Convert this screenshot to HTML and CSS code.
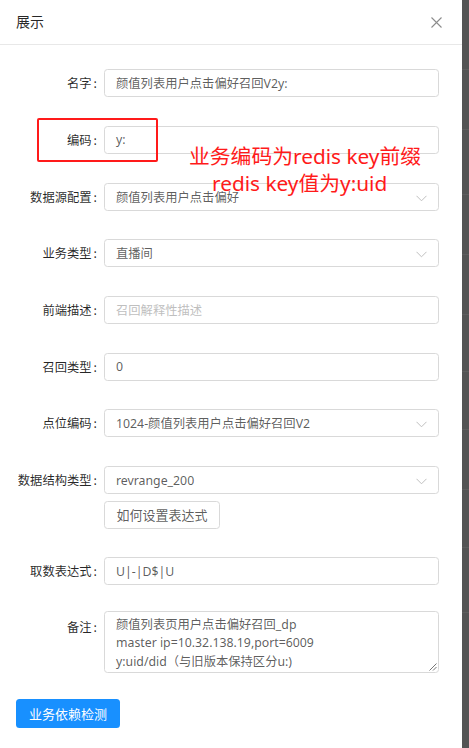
FILE: index.html
```html
<!DOCTYPE html>
<html lang="zh">
<head>
<meta charset="utf-8">
<title>展示</title>
<link rel="stylesheet" href="styles.css">
</head>
<body>
<div class="page">
  <div class="modal">
    <div class="header">
      <div class="title">展示</div>
      <svg class="close" width="11" height="11" viewBox="0 0 11 11"><path d="M0.5 0.5L10.5 10.5M10.5 0.5L0.5 10.5" stroke="#8c8c8c" stroke-width="1.1" fill="none"/></svg>
    </div>
    <div class="body">
      <div class="row">
        <div class="label">名字</div>
        <div class="input">颜值列表用户点击偏好召回V2y:</div>
      </div>
      <div class="row">
        <div class="label">编码</div>
        <div class="input">y:</div>
      </div>
      <div class="row">
        <div class="label">数据源配置</div>
        <div class="input select">颜值列表用户点击偏好<svg class="arrow" width="11" height="7" viewBox="0 0 11 7"><path d="M0.5 0.8L5.5 5.8L10.5 0.8" stroke="#bfbfbf" stroke-width="1" fill="none"/></svg></div>
      </div>
      <div class="row">
        <div class="label">业务类型</div>
        <div class="input select">直播间<svg class="arrow" width="11" height="7" viewBox="0 0 11 7"><path d="M0.5 0.8L5.5 5.8L10.5 0.8" stroke="#bfbfbf" stroke-width="1" fill="none"/></svg></div>
      </div>
      <div class="row">
        <div class="label">前端描述</div>
        <div class="input placeholder">召回解释性描述</div>
      </div>
      <div class="row">
        <div class="label">召回类型</div>
        <div class="input">0</div>
      </div>
      <div class="row">
        <div class="label">点位编码</div>
        <div class="input select">1024-颜值列表用户点击偏好召回V2<svg class="arrow" width="11" height="7" viewBox="0 0 11 7"><path d="M0.5 0.8L5.5 5.8L10.5 0.8" stroke="#bfbfbf" stroke-width="1" fill="none"/></svg></div>
      </div>
      <div class="row tight">
        <div class="label">数据结构类型</div>
        <div class="input select">revrange_200<svg class="arrow" width="11" height="7" viewBox="0 0 11 7"><path d="M0.5 0.8L5.5 5.8L10.5 0.8" stroke="#bfbfbf" stroke-width="1" fill="none"/></svg></div>
      </div>
      <div class="row help">
        <div></div>
        <div><span class="btn">如何设置表达式</span></div>
      </div>
      <div class="row short">
        <div class="label">取数表达式</div>
        <div class="input">U|-|D$|U</div>
      </div>
      <div class="row area-row">
        <div class="label top">备注</div>
        <div class="textarea">颜值列表页用户点击偏好召回_dp<br>master ip=10.32.138.19,port=6009<br>y:uid/did（与旧版本保持区分u:)<svg class="grip" width="9" height="9" viewBox="0 0 9 9"><path d="M8.5 1.5L1.5 8.5M8.5 5L5 8.5" stroke="#666" stroke-width="0.9" fill="none"/></svg></div>
      </div>
      <div class="footer">
        <span class="primary">业务依赖检测</span>
      </div>
      <div class="markbox"></div>
      <div class="note">业务编码为redis key前缀<br><span class="note2">redis key值为y:uid</span></div>
    </div>
  </div>
  <div class="mask">
    <div class="ml" style="height:70px"></div>
    <div class="ml" style="height:60px"></div>
    <div class="ml" style="height:65px"></div>
    <div class="ml" style="height:60px"></div>
    <div class="ml" style="height:60px"></div>
    <div class="ml" style="height:57px"></div>
    <div class="ml" style="height:58px"></div>
    <div class="ml" style="height:60px"></div>
    <div class="ml" style="height:58px"></div>
    <div class="ml" style="height:65px"></div>
  </div>
</div>
</body>
</html>
```
FILE: styles.css
```css
* { box-sizing: border-box; }
html, body { margin: 0; padding: 0; background: #fff; }
body {
  font-family: "Noto Sans", "Noto Sans CJK SC", sans-serif;
  font-size: 12.3px;
  color: rgba(0,0,0,0.65);
}
.page { display: flex; width: 469px; height: 748px; overflow: hidden; }
.modal { width: 462px; height: 748px; background: #fff; flex: none; }
.mask { width: 7px; height: 748px; background: #545454; flex: none; display: flex; flex-direction: column; }
.ml { border-bottom: 1px solid #5e5e5e; flex: none; }
.header {
  height: 45px;
  border-bottom: 1px solid #e8e8e8;
  display: flex;
  align-items: center;
  justify-content: space-between;
  padding: 0 20px 2px 16px;
}
.title { font-size: 14px; color: rgba(0,0,0,0.85); font-family: "Noto Sans CJK SC", sans-serif; }
.close { display: block; margin-top: 2px; }
.body { position: relative; padding: 24.3px 23px 0 16px; }
.row {
  display: grid;
  grid-template-columns: 88px 335px;
  align-items: center;
  margin-bottom: 28.7px;
}
.row.tight { margin-bottom: 0; }
.row.help { padding-top: 6.8px; margin-bottom: 28.3px; }
.row.short { margin-bottom: 26px; }
.row.area-row { align-items: start; margin-bottom: 25.7px; }
.label {
  text-align: right;
  padding-right: 7px;
  color: rgba(0,0,0,0.85);
  white-space: nowrap;
  font-family: "Noto Sans CJK SC", sans-serif;
}
.label::after { content: ":"; margin-left: 2px; }
.label.top { padding-top: 7px; }
.input {
  position: relative;
  height: 28px;
  border: 1px solid #d9d9d9;
  border-radius: 3.5px;
  padding: 0 10px 0 11px;
  display: flex;
  align-items: center;
  white-space: nowrap;
}
.placeholder { color: #bfbfbf; }
.arrow { position: absolute; right: 11px; top: 11px; }
.btn {
  display: inline-flex;
  align-items: center;
  justify-content: center;
  width: 116px;
  height: 28px;
  border: 1px solid #d9d9d9;
  border-radius: 3.5px;
  font-size: 13px;
  color: rgba(0,0,0,0.65);
  font-family: "Noto Sans CJK SC", sans-serif;
}
.textarea {
  position: relative;
  height: 62px;
  border: 1px solid #d9d9d9;
  border-radius: 3.5px;
  padding: 4px 10px 0 11px;
  line-height: 18.2px;
  white-space: nowrap;
}
.grip { position: absolute; right: 1px; bottom: 1px; }
.footer { display: flex; }
.primary {
  display: inline-flex;
  align-items: center;
  justify-content: center;
  width: 104px;
  height: 29px;
  background: #1890ff;
  border-radius: 3.5px;
  color: #fff;
  font-size: 13px;
  font-family: "Noto Sans CJK SC", sans-serif;
}
.markbox {
  position: absolute;
  left: 37.3px;
  top: 73.3px;
  width: 121px;
  height: 43.4px;
  border: 2.5px solid #ff1a1a;
  border-radius: 2px;
}
.note {
  position: absolute;
  left: 189px;
  top: 97.5px;
  font-size: 20.8px;
  line-height: 27px;
  color: #ff1a1a;
  white-space: nowrap;
  font-family: "Noto Sans", "Noto Sans CJK SC", sans-serif;
}
.note2 { padding-left: 23px; }
```
